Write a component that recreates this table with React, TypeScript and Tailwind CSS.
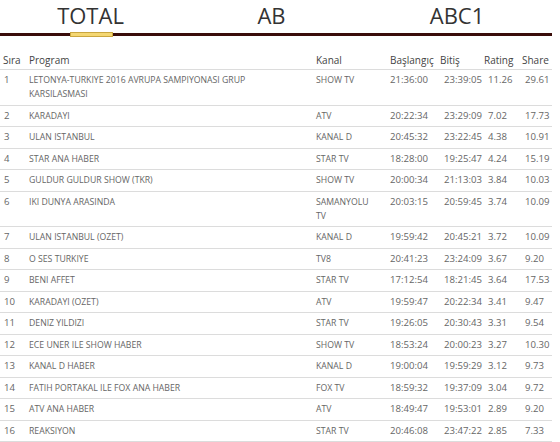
const rows: [number, string[], string[], string, string, string, string][] = [
  [1, ['LETONYA-TURKIYE 2016 AVRUPA SAMPIYONASI GRUP', 'KARSILASMASI'], ['SHOW TV'], '21:36:00', '23:39:05', '11.26', '29.61'],
  [2, ['KARADAYI'], ['ATV'], '20:22:34', '23:29:09', '7.02', '17.73'],
  [3, ['ULAN ISTANBUL'], ['KANAL D'], '20:45:32', '23:22:45', '4.38', '10.91'],
  [4, ['STAR ANA HABER'], ['STAR TV'], '18:28:00', '19:25:47', '4.24', '15.19'],
  [5, ['GULDUR GULDUR SHOW (TKR)'], ['SHOW TV'], '20:00:34', '21:13:03', '3.84', '10.03'],
  [6, ['IKI DUNYA ARASINDA'], ['SAMANYOLU', 'TV'], '20:03:15', '20:59:45', '3.74', '10.09'],
  [7, ['ULAN ISTANBUL (OZET)'], ['KANAL D'], '19:59:42', '20:45:21', '3.72', '10.09'],
  [8, ['O SES TURKIYE'], ['TV8'], '20:41:23', '23:24:09', '3.67', '9.20'],
  [9, ['BENI AFFET'], ['STAR TV'], '17:12:54', '18:21:45', '3.64', '17.53'],
  [10, ['KARADAYI (OZET)'], ['ATV'], '19:59:47', '20:22:34', '3.41', '9.47'],
  [11, ['DENIZ YILDIZI'], ['STAR TV'], '19:26:05', '20:30:43', '3.31', '9.54'],
  [12, ['ECE UNER ILE SHOW HABER'], ['SHOW TV'], '18:53:24', '20:00:23', '3.27', '10.30'],
  [13, ['KANAL D HABER'], ['KANAL D'], '19:00:04', '19:59:29', '3.12', '9.73'],
  [14, ['FATIH PORTAKAL ILE FOX ANA HABER'], ['FOX TV'], '18:59:32', '19:37:09', '3.04', '9.72'],
  [15, ['ATV ANA HABER'], ['ATV'], '18:49:47', '19:53:01', '2.89', '9.20'],
  [16, ['REAKSIYON'], ['STAR TV'], '20:46:08', '23:47:22', '2.85', '7.33'],
]

export default function App() {
  return (
    <div className="h-[442px] w-[560px] overflow-hidden bg-white font-['Open_Sans',sans-serif]">
      <div className="w-[552px]">
        <div className="relative">
          <div className="flex h-[33px] text-[22px] leading-[30px] text-[#333]">
            <div className="w-[181px] shrink-0 text-center">TOTAL</div>
            <div className="w-[181px] shrink-0 text-center">AB</div>
            <div className="w-[190px] shrink-0 text-center">ABC1</div>
          </div>
          <div className="h-[3px] bg-[#3a0d0a]" />
          <div className="absolute left-[70px] top-[32px] h-[5px] w-[43px] border border-[#caa63e] bg-[#f4d772]" />
        </div>

        <div className="flex border-b border-[#dcdcdc] pb-[2px] pt-[17px] text-[10px] leading-[14px] text-[#444]">
          <div className="w-[26px] shrink-0 pl-[3px]">Sıra</div>
          <div className="w-[287px] shrink-0 pl-[3px]">Program</div>
          <div className="w-[74px] shrink-0 pl-[3px]">Kanal</div>
          <div className="w-[50px] shrink-0 pl-[3px]">Başlangıç</div>
          <div className="w-[46px] shrink-0 pl-[3px]">Bitiş</div>
          <div className="w-[36px] shrink-0 pl-[1px]">Rating</div>
          <div className="w-[33px] shrink-0 pl-[3px]">Share</div>
        </div>

        {rows.map(([n, prog, kanal, start, end, rating, share]) => (
          <div
            key={n}
            className="flex border-b border-[#dcdcdc] py-[3.25px] text-[9.6px] leading-[14px] text-[#666]"
          >
            <div className="w-[26px] shrink-0 pl-[4px]">{n}</div>
            <div className="w-[287px] shrink-0 pl-[3px] text-[8.7px]">
              {prog.map((p) => (
                <div key={p}>{p}</div>
              ))}
            </div>
            <div className="w-[74px] shrink-0 pl-[3px] text-[8.7px]">
              {kanal.map((k) => (
                <div key={k}>{k}</div>
              ))}
            </div>
            <div className="w-[50px] shrink-0 pl-[3px]">{start}</div>
            <div className="w-[46px] shrink-0 pl-[7px]">{end}</div>
            <div className="w-[36px] shrink-0 pl-[5px]">{rating}</div>
            <div className="w-[33px] shrink-0 pl-[6px]">{share}</div>
          </div>
        ))}
      </div>
    </div>
  )
}
